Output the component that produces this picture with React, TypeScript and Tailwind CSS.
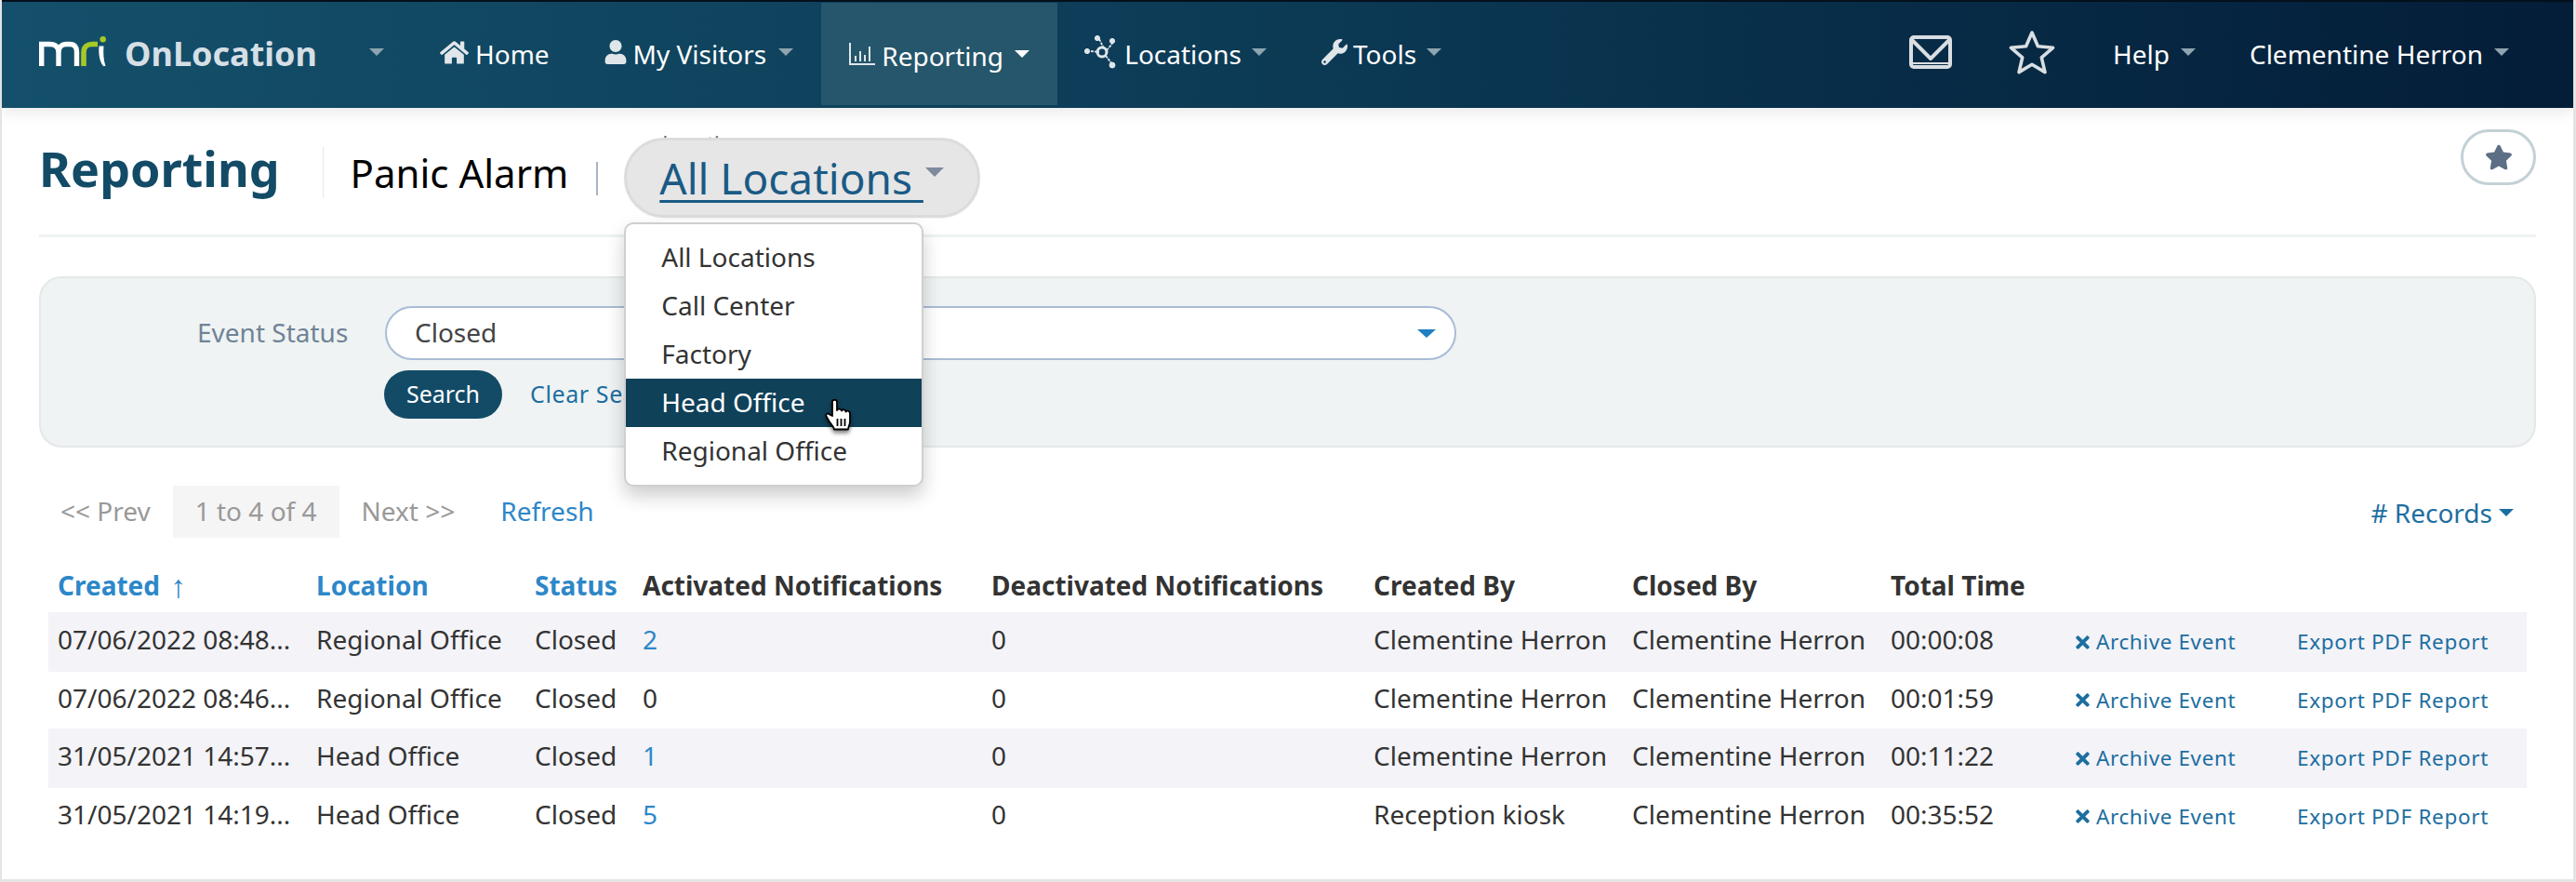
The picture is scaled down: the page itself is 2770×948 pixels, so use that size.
import React from 'react';
import { FaHome, FaUser, FaWrench, FaStar, FaTimes } from 'react-icons/fa';

const font = "font-['Noto_Sans',sans-serif]";

const Caret = ({ className }: { className: string }) => (
  <span className={`inline-block h-0 w-0 border-x-[8px] border-t-[8px] border-x-transparent ${className}`} />
);

const MriLogo = () => (
  <svg width="72" height="34" viewBox="0 0 72 34" className="shrink-0">
    <g fill="none" stroke="#fff" strokeWidth="5.4">
      <path d="M2.7 32V8.5h8.8c6 0 9.5 3 9.5 8.5v15" />
      <path d="M21 17c0-5.500 3.500-8.500 8.500-8.500h3.500c5 0 7.500 3 7.500 8V32" />
    </g>
    <path d="M48 32V17c0-5.500 4-8.500 9-8.500h6" fill="none" stroke="#a6c928" strokeWidth="5.6" />
    <path d="M64.500 10.500h5c-.6 8-.2 15 2 21.500h-2.500c-4-5-5.200-13-4.500-21.500z" fill="#fff" />
    <circle cx="68.700" cy="3.200" r="3.200" fill="#a6c928" />
  </svg>
);

const ChartIcon = () => (
  <svg width="28" height="24" viewBox="0 0 28 24" fill="none" stroke="#dfe6ea" strokeWidth="2" className="shrink-0">
    <path d="M1 0v23h27" />
    <path d="M7 20v-6M12 20V9M17 20v-7M22 20V4" />
  </svg>
);

const NetworkIcon = () => (
  <svg width="36" height="36" viewBox="0 0 36 36" fill="#dfe6ea" stroke="#dfe6ea" className="shrink-0">
    <path d="M16 4l5 10M7 17l9 1M23 22l7 9M24 16l6-7" strokeWidth="1.800" strokeDasharray="3 1" fill="none" />
    <circle cx="19" cy="18" r="5" fill="none" strokeWidth="3" />
    <circle cx="14" cy="3" r="2.600" />
    <circle cx="3" cy="17" r="2.600" />
    <circle cx="30" cy="6" r="2.600" />
    <circle cx="30" cy="32" r="3" />
  </svg>
);

const MailIcon = () => (
  <svg width="46" height="36" viewBox="0 0 46 36" fill="none" stroke="#d9dee2" strokeWidth="4" className="shrink-0">
    <rect x="2" y="2" width="42" height="32" rx="3" />
    <path d="M3 5l20 20L43 5" strokeLinejoin="round" />
    <path d="M3 30h40" strokeWidth="2" />
  </svg>
);

const StarOutline = () => (
  <svg width="50" height="48" viewBox="0 0 50 48" fill="none" stroke="#d9dee2" strokeWidth="3.600" strokeLinejoin="round" className="shrink-0">
    <path d="M25 3l6.400 14.800 16.100 1.500-12.200 10.600 3.700 15.700L25 37.300 11 45.600l3.700-15.700L2.500 19.300l16.100-1.500z" />
  </svg>
);

const HandCursor = () => (
  <svg width="32" height="36" viewBox="0 0 32 36" className="absolute left-[213px] top-[188px] drop-shadow-[0_3px_2px_rgba(0,0,0,0.5)]">
    <path
      d="M9 18V3c0-3 5-3 5 0v9c.5-2 4.500-2 5 .5.500-2 4.500-1.500 4.500 1 .8-1.700 4.500-1 4.500 2v8c0 4-1.500 5-2 9H11c-.5-3-3-5-5-8l-3.500-6c-1-2.500 2-4 3.500-2z"
      fill="#fff"
      stroke="#000"
      strokeWidth="1.800"
      strokeLinejoin="round"
    />
    <path d="M14.500 21v8M18.500 21v8M22.500 21v8" stroke="#000" strokeWidth="1.800" />
  </svg>
);

const navItemText = 'mt-[3px] text-[28px] leading-[38px] text-white whitespace-nowrap';

const rows = [
  ['07/06/2022 08:48...', 'Regional Office', '2', 'Clementine Herron', '00:00:08'],
  ['07/06/2022 08:46...', 'Regional Office', '0', 'Clementine Herron', '00:01:59'],
  ['31/05/2021 14:57...', 'Head Office', '1', 'Clementine Herron', '00:11:22'],
  ['31/05/2021 14:19...', 'Head Office', '5', 'Reception kiosk', '00:35:52'],
];

const App: React.FC = () => {
  return (
    <div className={`${font} flex h-[948px] w-[2770px] flex-col overflow-hidden border-b-[3px] border-l-[2px] border-r-[3px] border-b-[#e4e4e4] border-l-[#e4e4e4] border-r-[#e4e4e4] bg-white`}>
      {/* Top nav */}
      <nav className="relative z-10 flex h-[116px] shrink-0 items-center border-t-[2px] border-t-[#04101c] bg-gradient-to-r from-[#14506b] via-[#0c3a55] to-[#041d38] pb-[6px] shadow-[0_6px_14px_rgba(0,0,0,0.08)]">
        <div className="ml-[40px] flex items-center">
          <MriLogo />
          <span className="ml-[20px] mt-[4px] text-[36px] font-bold leading-[44px] text-[#d5dfe5]">OnLocation</span>
        </div>
        <Caret className="ml-[56px] border-t-[#8ea4b0]" />

        <div className="ml-[60px] flex items-center gap-[7px]">
          <FaHome className="text-[31px] text-[#dfe6ea]" />
          <span className={navItemText}>Home</span>
        </div>

        <div className="ml-[58px] flex items-center gap-[6px]">
          <FaUser className="text-[26px] text-[#dfe6ea]" />
          <span className={navItemText}>My Visitors</span>
          <Caret className="ml-[7px] border-t-[#8ea4b0]" />
        </div>

        <div className="ml-[30px] -mb-[4px] flex h-[110px] w-[254px] items-center bg-[#25566b] pl-[30px]">
          <ChartIcon />
          <span className={`${navItemText} ml-[7px]`}>Reporting</span>
          <Caret className="ml-[12px] border-t-white" />
        </div>

        <div className="ml-[29px] flex items-center gap-[7px]">
          <NetworkIcon />
          <span className={navItemText}>Locations</span>
          <Caret className="ml-[4px] border-t-[#8ea4b0]" />
        </div>

        <div className="ml-[59px] flex items-center gap-[6px]">
          <FaWrench className="text-[28px] text-[#dfe6ea]" />
          <span className={navItemText}>Tools</span>
          <Caret className="ml-[5px] border-t-[#8ea4b0]" />
        </div>

        <div className="ml-auto flex items-center pr-[69px]">
          <MailIcon />
          <div className="ml-[61px]">
            <StarOutline />
          </div>
          <span className={`${navItemText} ml-[62px]`}>Help</span>
          <Caret className="ml-[12px] border-t-[#8ea4b0]" />
          <span className={`${navItemText} ml-[58px]`}>Clementine Herron</span>
          <Caret className="ml-[12px] border-t-[#8ea4b0]" />
        </div>
      </nav>

      {/* Title row */}
      <header className="mx-[40px] flex h-[139px] shrink-0 items-start border-b-[3px] border-b-[#eef2f2]">
        <h1 className="mt-[30px] text-[52px] font-bold leading-[70px] text-[#134b67]">Reporting</h1>
        <div className="ml-[46px] mt-[42px] h-[55px] w-[1px] bg-[#e8e8e8]" />
        <span className="ml-[29px] mt-[43px] text-[42px] leading-[54px] text-black">Panic Alarm</span>
        <div className="ml-[30px] mt-[58px] h-[36px] w-[2px] bg-[#a9b3c4]" />
        <div className="relative ml-[28px] mt-[32px]">
          <span className="absolute left-[41px] top-[-6px] h-[6px] overflow-hidden text-[22px] leading-[22px] text-[#666]">Location</span>
          <div className="relative flex h-[86px] w-[383px] items-center rounded-[43px] border-[3px] border-[#dcdcdc] bg-[#e6e6e6] pl-[35px] shadow-[0_1px_2px_rgba(0,0,0,0.05)]">
            <span className="whitespace-pre text-[46px] leading-[64px] text-[#1a5a85] underline decoration-[3px] underline-offset-[6px]">All Locations </span>
            <Caret className="mb-[12px] ml-[2px] border-x-[10px] border-t-[10px] border-t-[#7d8b9c]" />
          </div>
          {/* Location dropdown */}
          <ul className="absolute left-0 top-[91px] z-20 w-[322px] rounded-[10px] border-[2px] border-[#cfcfcf] bg-white pb-[10px] pt-[10px] text-[28px] text-[#333] shadow-[0_10px_20px_rgba(0,0,0,0.2)]">
            <li className="flex h-[52px] items-center pb-[2px] pl-[38px]">All Locations</li>
            <li className="flex h-[52px] items-center pb-[2px] pl-[38px]">Call Center</li>
            <li className="flex h-[52px] items-center pb-[2px] pl-[38px]">Factory</li>
            <li className="flex h-[52px] items-center bg-[#0f4159] pb-[2px] pl-[38px] text-white">Head Office</li>
            <li className="flex h-[52px] items-center pb-[2px] pl-[38px]">Regional Office</li>
            <HandCursor />
          </ul>
        </div>
        <button className="ml-auto mt-[23px] flex h-[60px] w-[81px] items-center justify-center rounded-[30px] border-[3px] border-[#c3d1d5] bg-white">
          <FaStar className="text-[30px] text-[#5d6f85]" />
        </button>
      </header>

      {/* Filter panel */}
      <section className="mx-[40px] mt-[42px] h-[184px] shrink-0 rounded-[24px] border-[2px] border-[#e4e8e8] bg-[#eff3f3] pt-[30px]">
        <div className="flex items-center">
          <label className="ml-[168px] w-[202px] pb-[2px] text-[28px] leading-[38px] text-[#6f8397]">Event Status</label>
          <div className="flex h-[58px] w-[1152px] items-center justify-between rounded-[29px] border-[2px] border-[#a9bcd6] bg-white pl-[30px] pr-[20px]">
            <span className="pb-[2px] text-[28px] leading-[38px] text-[#444]">Closed</span>
            <Caret className="border-x-[10px] border-t-[9px] border-t-[#1f7fc4]" />
          </div>
        </div>
        <div className="ml-[369px] mt-[11px] flex items-center">
          <button className="flex h-[52px] w-[127px] items-center justify-center rounded-[26px] bg-[#134b67] text-[25px] text-white">Search</button>
          <a className="ml-[30px] text-[25px] tracking-[0.6px] text-[#1c6ea0]">Clear Search</a>
        </div>
      </section>

      {/* Pagination */}
      <div className="ml-[63px] mr-[64px] mt-[41px] flex h-[56px] shrink-0 items-center text-[28px]">
        <span className="pb-[2px] text-[#999]">&lt;&lt; Prev</span>
        <span className="ml-[24px] flex h-[56px] items-center bg-[#f5f5f5] px-[24px] pb-[2px] text-[#999]">1 to 4 of 4</span>
        <span className="ml-[24px] pb-[2px] text-[#999]">Next &gt;&gt;</span>
        <span className="ml-[49px] pb-[2px] text-[#2d87c8]">Refresh</span>
        <span className="ml-auto mt-[2px] flex items-center text-[#1c6ea0]">
          # Records
          <Caret className="ml-[7px] border-t-[#1c6ea0]" />
        </span>
      </div>

      {/* Events table */}
      <table className="ml-[50px] mt-[30px] w-[2665px] table-fixed border-collapse text-[28px] text-[#333]">
        <colgroup>
          <col className="w-[278px]" />
          <col className="w-[235px]" />
          <col className="w-[116px]" />
          <col className="w-[375px]" />
          <col className="w-[411px]" />
          <col className="w-[278px]" />
          <col className="w-[278px]" />
          <col className="w-[197px]" />
          <col className="w-[240px]" />
          <col className="w-[257px]" />
        </colgroup>
        <thead>
          <tr className="h-[48px] text-left font-bold">
            <th className="whitespace-nowrap pb-[8px] pl-[10px] text-[#2d87c8]">
              Created <span className="ml-[4px] align-[-2px] text-[34px] font-normal leading-[28px]">↑</span>
            </th>
            <th className="pb-[8px] pl-[10px] text-[#2d87c8]">Location</th>
            <th className="pb-[8px] pl-[10px] text-[#2d87c8]">Status</th>
            <th className="pb-[8px] pl-[10px]">Activated Notifications</th>
            <th className="pb-[8px] pl-[10px]">Deactivated Notifications</th>
            <th className="pb-[8px] pl-[10px]">Created By</th>
            <th className="pb-[8px] pl-[10px]">Closed By</th>
            <th className="pb-[8px] pl-[10px]">Total Time</th>
            <th />
            <th />
          </tr>
        </thead>
        <tbody>
          {rows.map((row, index) => (
            <tr key={index} className={index % 2 === 0 ? 'h-[64px] bg-[#f3f3f8]' : 'h-[61px]'}>
              <td className="whitespace-nowrap pb-[6px] pl-[10px]">{row[0]}</td>
              <td className="whitespace-nowrap pb-[6px] pl-[10px]">{row[1]}</td>
              <td className="pb-[6px] pl-[10px]">Closed</td>
              <td className={`pb-[6px] pl-[10px] ${row[2] === '0' ? '' : 'text-[#2d87c8]'}`}>{row[2]}</td>
              <td className="pb-[6px] pl-[10px]">0</td>
              <td className="whitespace-nowrap pb-[6px] pl-[10px]">{row[3]}</td>
              <td className="whitespace-nowrap pb-[6px] pl-[10px]">Clementine Herron</td>
              <td className="pb-[6px] pl-[10px]">{row[4]}</td>
              <td className="pl-[9px] text-[#1c6ea0]">
                <span className="flex items-center whitespace-nowrap text-[22.5px] tracking-[0.6px]">
                  <FaTimes className="mr-[4px] text-[21px]" />
                  Archive Event
                </span>
              </td>
              <td className="whitespace-nowrap pl-[10px] text-[22.5px] tracking-[0.7px] text-[#1c6ea0]">Export PDF Report</td>
            </tr>
          ))}
        </tbody>
      </table>
    </div>
  );
};

export default App;
